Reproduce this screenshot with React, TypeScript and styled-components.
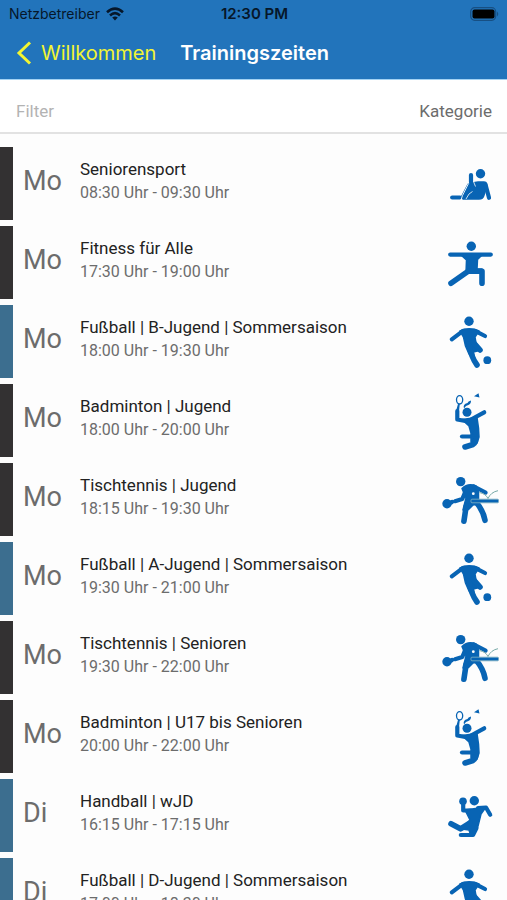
import React, { useState } from 'react';
import styled, { createGlobalStyle, ThemeProvider } from 'styled-components';

const theme = {
  bar: '#2274bb',
  barEdge: '#a3d2f3',
  accent: '#f2f531',
  icon: '#0864b4',
  dark: '#333132',
  teal: '#3c6e8f',
  text: '#222222',
  muted: '#6c6c6c',
  placeholder: '#b3b3b3',
  line: '#e2e2e2',
};

const GlobalStyle = createGlobalStyle`
  * {
    box-sizing: border-box;
  }

  body {
    margin: 0;
    background: #fdfdfd;
    font-family: Roboto, "Liberation Sans", sans-serif;
  }
`;

const Page = styled.div`
  height: 100vh;
  display: flex;
  flex-direction: column;
`;

const Header = styled.header`
  background: ${({ theme }) => theme.bar};
  border-bottom: solid 1px ${({ theme }) => theme.barEdge};
  font-family: Inter, "Liberation Sans", sans-serif;
`;

const StatusBar = styled.div`
  display: grid;
  grid-template-columns: 1fr auto 1fr;
  align-items: center;
  height: 27px;
  padding: 0 7px 0 9px;
  font-size: 15px;
  color: #06172a;
`;

const Carrier = styled.span`
  display: flex;
  align-items: center;
  gap: 5px;
  font-size: 14px;
`;

const Clock = styled.span`
  font-weight: 600;
`;

const Battery = styled.svg`
  justify-self: end;
`;

const NavBar = styled.nav`
  display: flex;
  align-items: center;
  gap: 24px;
  height: 52px;
  padding: 0 16px;
  font-size: 20px;
`;

const BackLink = styled.a`
  display: flex;
  align-items: center;
  gap: 9px;
  color: ${({ theme }) => theme.accent};
  text-decoration: none;
`;

const Title = styled.h1`
  margin: 0;
  color: #ffffff;
  font-size: 20px;
  font-weight: 600;
`;

const FilterBar = styled.div`
  display: flex;
  justify-content: space-between;
  align-items: center;
  height: 54px;
  padding: 10px 15px 0 16px;
  background: #ffffff;
  border-bottom: solid 2px ${({ theme }) => theme.line};
`;

const FilterInput = styled.input`
  flex: 1;
  min-width: 0;
  padding: 0;
  border: none;
  outline: none;
  background: transparent;
  color: ${({ theme }) => theme.text};
  font-family: inherit;
  font-size: 17px;
  &::placeholder {
    color: ${({ theme }) => theme.placeholder};
    opacity: 1;
  }
`;

const CategoryButton = styled.button`
  padding: 0;
  border: none;
  background: transparent;
  color: ${({ theme }) => theme.muted};
  font-family: inherit;
  font-size: 17px;
  cursor: pointer;
`;

const List = styled.ul`
  flex: 1;
  display: flex;
  flex-direction: column;
  gap: 6px;
  min-height: 0;
  margin: 0;
  padding: 13px 0;
  overflow: auto;
  list-style: none;
  scrollbar-width: none;
`;

const Row = styled.li<{ $own: boolean }>`
  flex: none;
  display: flex;
  align-items: center;
  height: 73px;
  padding-right: 7px;
  border-left: solid 13px ${({ theme, $own }) => $own ? theme.teal : theme.dark};
`;

const Day = styled.span`
  width: 67px;
  padding: 0 0 6px 10px;
  color: ${({ theme }) => theme.muted};
  font-size: 27px;
`;

const Details = styled.div`
  flex: 1;
  min-width: 0;
  padding-bottom: 5px;
`;

const Name = styled.div`
  color: ${({ theme }) => theme.text};
  font-size: 17px;
  line-height: 24px;
`;

const Time = styled.div`
  color: ${({ theme }) => theme.muted};
  font-size: 16px;
  line-height: 24px;
`;

const Figure = styled.svg`
  width: 60px;
  height: 60px;
  flex: none;
  fill: ${({ theme }) => theme.icon};
`;

const Limb = styled.path`
  fill: none;
  stroke: ${({ theme }) => theme.icon};
  stroke-width: 5.6px;
  stroke-linecap: round;
  stroke-linejoin: round;
`;

const Arm = styled(Limb)`
  stroke-width: 4.2px;
`;

const Body = styled.path`
  stroke: ${({ theme }) => theme.icon};
  stroke-width: 1.5px;
  stroke-linejoin: round;
`;

type Sport = 'senior' | 'fitness' | 'football' | 'badminton' | 'tabletennis' | 'handball';

const figures: Record<Sport, React.ReactNode> = {
  senior: (
    <>
      <circle cx="40.5" cy="19.7" r="4.7" />
      <Arm d="M31 21V28" />
      <Body d="M30 28C33 30 35 28 38 28H44C47 28 47 31 46.300 34L44 41Q43 45 39 45H23L26 41L30 31Z" />
      <Arm d="M45.500 30.500L49 43.800" />
      <Arm d="M12.200 43.500H20" />
      <Arm d="M23 43L29 31.500" />
      <path d="M20.800 46.500L22.500 41.500L28.500 29.500" fill="none" stroke="#fdfdfd" strokeWidth=".9" />
      <path d="M26 45L29 40L32.500 37.500M33.500 27.500L35.500 32.500" fill="none" stroke="#fdfdfd" strokeWidth=".8" />
    </>
  ),
  fitness: (
    <>
      <circle cx="31.3" cy="13.3" r="4.7" />
      <Arm d="M10.200 21.600H50.800" />
      <Body d="M21 22H42L37.500 26.500L37 36H42L39 40H26L26.500 27Z" />
      <Limb d="M28.500 38L11 50.300" />
      <Limb d="M29 38.300H42V50.300" />
    </>
  ),
  football: (
    <>
      <circle cx="29" cy="9.300" r="4.700" />
      <Arm d="M11.800 27.300L23 18.800H35L45 24" />
      <Body d="M20 19Q29 14.500 39 19L35 25L36 31L41 38L33.500 40L34.500 46L29 42L25.500 34L23.500 25Z" />
      <Limb d="M29 32Q30.500 44 37 53" />
      <Limb d="M33 30L40 38" />
      <circle cx="47.300" cy="48.200" r="3.900" />
    </>
  ),
  badminton: (
    <>
      <ellipse cx="19.600" cy="8.800" rx="3.100" ry="4.200" fill="none" stroke="#0864b4" strokeWidth="1.300" />
      <Arm as="path" d="M17.300 20V28.500L28 30.500" />
      <path d="M18 13H19.800L19 20H16Z" />
      <circle cx="27" cy="21.300" r="4.500" />
      <path d="M24 17.500Q22.500 13 27.500 12Q28 10 31 9.500Q31.500 13.500 26 15Z" />
      <Arm d="M31 28.500L44.200 21.300" />
      <Body d="M22 28.500L37 26.500L38.500 37L39 46L37 52L31 51V42L29 35Z" />
      <Limb d="M35.500 42Q37 51 33 53.500L25 56" />
      <Arm d="M22 45.500H33" />
      <path d="M34 5.200L38.500 2.200L39.500 6.500Z" />
    </>
  ),
  tabletennis: (
    <>
      <circle cx="20.700" cy="11.600" r="4.700" />
      <circle cx="7" cy="33.700" r="4.700" />
      <Arm d="M9 33.500L12 32" />
      <Arm d="M15 31.200L22.300 29L26 20" />
      <Body d="M22 18.500Q28 12.500 36 16L38.500 22V34L33 35L28.500 39.500L23 40L26 28Z" />
      <Arm d="M34 16.500L45.600 22.500" />
      <Limb d="M26.200 36L23.900 51.300" />
      <Limb d="M36 32Q43.500 41 45 50.300" />
      <circle cx="33.300" cy="23.700" r="1.400" fill="#fdfdfd" />
      <rect x="31" y="29.200" width="27.500" height="3.600" rx="1" stroke="#77acc2" strokeWidth=".9" />
      <path d="M39.500 22.500Q46 24 48 28.500Q51 22 58 20.700" stroke="#78aaa8" strokeWidth="1" fill="none" />
    </>
  ),
  handball: (
    <>
      <circle cx="34.300" cy="14.700" r="4.700" />
      <circle cx="23" cy="15.200" r="3.800" />
      <Arm d="M23.200 16V24.500H31" />
      <Arm d="M38 22.200L46 21.500L50.200 28.800" />
      <Body d="M25 24L46 21L41 28L38 40L33.500 47H30L29 44L22 43L30 34Z" />
      <Limb d="M11 37.800L20.500 42.800L30 37" />
      <Arm d="M20.800 49H33L36.500 42" />
    </>
  ),
};

interface Training {
  day: string;
  name: string;
  time: string;
  sport: Sport;
  own: boolean;
}

const trainings: Training[] = [
  { day: 'Mo', name: 'Seniorensport', time: '08:30 Uhr - 09:30 Uhr', sport: 'senior', own: false },
  { day: 'Mo', name: 'Fitness für Alle', time: '17:30 Uhr - 19:00 Uhr', sport: 'fitness', own: false },
  { day: 'Mo', name: 'Fußball | B-Jugend | Sommersaison', time: '18:00 Uhr - 19:30 Uhr', sport: 'football', own: true },
  { day: 'Mo', name: 'Badminton | Jugend', time: '18:00 Uhr - 20:00 Uhr', sport: 'badminton', own: false },
  { day: 'Mo', name: 'Tischtennis | Jugend', time: '18:15 Uhr - 19:30 Uhr', sport: 'tabletennis', own: false },
  { day: 'Mo', name: 'Fußball | A-Jugend | Sommersaison', time: '19:30 Uhr - 21:00 Uhr', sport: 'football', own: true },
  { day: 'Mo', name: 'Tischtennis | Senioren', time: '19:30 Uhr - 22:00 Uhr', sport: 'tabletennis', own: false },
  { day: 'Mo', name: 'Badminton | U17 bis Senioren', time: '20:00 Uhr - 22:00 Uhr', sport: 'badminton', own: false },
  { day: 'Di', name: 'Handball | wJD', time: '16:15 Uhr - 17:15 Uhr', sport: 'handball', own: true },
  { day: 'Di', name: 'Fußball | D-Jugend | Sommersaison', time: '17:00 Uhr - 18:30 Uhr', sport: 'football', own: true },
];

const App: React.FC = () => {
  const [filter, setFilter] = useState('');

  const visible = trainings.filter(({ name }) => name.toLowerCase().includes(filter.toLowerCase()));

  return (
    <ThemeProvider theme={theme}>
      <GlobalStyle />
      <Page>
        <Header>
          <StatusBar>
            <Carrier>
              Netzbetreiber
              <svg width="20" height="14" viewBox="0 0 18 14" fill="none" stroke="#06172a" strokeWidth="2.6">
                <path d="M1 5.200Q9 -2 17 5.200" />
                <path d="M4 8.400Q9 4 14 8.400" />
                <path d="M9 13.500L6.200 10.600Q9 8.400 11.800 10.600Z" fill="#06172a" stroke="none" />
              </svg>
            </Carrier>
            <Clock>12:30 PM</Clock>
            <Battery width="30" height="14" viewBox="0 0 30 14">
              <rect x=".7" y=".7" width="25" height="12.600" rx="4" fill="none" stroke="#174f83" strokeWidth="1.200" />
              <rect x="2.500" y="2.500" width="22" height="9" rx="2" fill="#000000" />
              <path d="M27 4.500Q29.500 7 27 9.500Z" fill="#174f83" />
            </Battery>
          </StatusBar>
          <NavBar>
            <BackLink href="#willkommen">
              <svg width="16" height="24" viewBox="0 0 16 24" fill="none" stroke="currentColor" strokeWidth="3">
                <path d="M14 1.500L3 12L14 22.500" />
              </svg>
              Willkommen
            </BackLink>
            <Title>Trainingszeiten</Title>
          </NavBar>
        </Header>
        <FilterBar>
          <FilterInput
            aria-label="Filter"
            placeholder="Filter"
            value={filter}
            onChange={e => setFilter(e.target.value)}
          />
          <CategoryButton type="button">Kategorie</CategoryButton>
        </FilterBar>
        <List>
          {visible.map(({ day, name, time, sport, own }) =>
            <Row key={day + name} $own={own}>
              <Day>{day}</Day>
              <Details>
                <Name>{name}</Name>
                <Time>{time}</Time>
              </Details>
              <Figure viewBox="0 0 60 60" aria-hidden="true">{figures[sport]}</Figure>
            </Row>)}
        </List>
      </Page>
    </ThemeProvider>
  );
}

export default App;
